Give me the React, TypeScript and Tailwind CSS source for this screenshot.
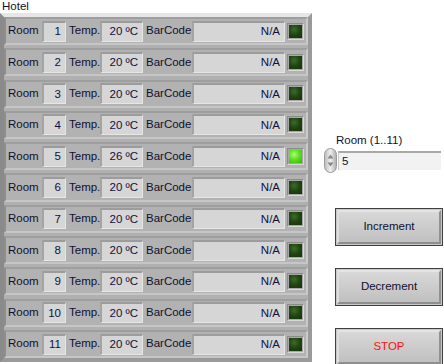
import React from "react";

const rows = Array.from({ length: 11 }, (_, i) => ({
  n: i + 1,
  t: i === 4 ? 26 : 20,
  on: i === 4,
}));

function Box({ w, children }: { w: string; children: React.ReactNode }) {
  return (
    <div
      className={`${w} h-[21px] flex items-center justify-end pr-[4px] bg-[#d6d6d6] border-t-2 border-l-2 border-b border-r border-t-[#9c9c9c] border-l-[#a4a4a4] border-b-[#e6e6e6] border-r-[#e6e6e6] text-[#101040]`}
    >
      {children}
    </div>
  );
}

function Led({ on }: { on: boolean }) {
  return (
    <div className="w-[17px] h-[17px] p-[1px] bg-[#a8a8a8] border-t border-l border-t-[#8c8c8c] border-l-[#8c8c8c] border-b border-r border-b-[#d8d8d8] border-r-[#d8d8d8]">
      <div
        className={
          on
            ? "w-full h-full bg-[radial-gradient(circle_at_40%_35%,#a8ff70_0%,#5ee022_45%,#3cb010_100%)]"
            : "w-full h-full bg-[radial-gradient(circle_at_40%_35%,#3e6a2c_0%,#1f4410_50%,#143208_100%)]"
        }
      />
    </div>
  );
}

function Row({ n, t, on }: { n: number; t: number; on: boolean }) {
  return (
    <div className="h-[28.5px] flex items-center bg-[#b2b2b2] border-2 border-t-[#9e9e9e] border-l-[#8e8e8e] border-r-[#cacaca] border-b-[#c6c6c6]">
      <div className="w-[36px] pl-[2px]">Room</div>
      <Box w="w-[24px]">{n}</Box>
      <div className="w-[34px] pl-[3px]">Temp.</div>
      <Box w="w-[43px]">{t} ºC</Box>
      <div className="w-[49px] pl-[3px]">BarCode</div>
      <Box w="w-[93px]">N/A</Box>
      <div className="ml-[2px]">
        <Led on={on} />
      </div>
    </div>
  );
}

function Btn({ label, red }: { label: string; red?: boolean }) {
  return (
    <div className="w-[108px] h-[38px] border border-[#404040] bg-[#c8c8c8] p-[1px]">
      <div className="w-full h-full flex items-center justify-center border-2 border-t-[#e4e4e4] border-l-[#dedede] border-r-[#929292] border-b-[#8e8e8e] bg-[linear-gradient(#d8d8d8,#c0c0c0)]">
        <span className={red ? "text-[#ff1010]" : "text-[#101030]"}>{label}</span>
      </div>
    </div>
  );
}

export default function App() {
  return (
    <div
      className="w-[444px] h-[364px] bg-white flex text-[11.5px] text-[#101030] overflow-hidden"
      style={{ fontFamily: "Tahoma, 'Liberation Sans', Arial, sans-serif" }}
    >
      <div className="w-[313px] flex flex-col">
        <div className="h-[14px] pl-[2px] leading-[14px] -mt-[1px]">Hotel</div>
        <div className="w-[312px] h-[349px] bg-[#b0b0b0] border-4 border-t-[#e6e6e6] border-l-[#8a8a8a] border-r-[#9a9a9a] border-b-[#9a9a9a] flex flex-col gap-[3.2px]">
          {rows.map((r) => (
            <Row key={r.n} {...r} />
          ))}
        </div>
      </div>
      <div className="flex-1 flex flex-col pl-[11px]">
        <div className="mt-[133px] pl-[12px] h-[14px] leading-[14px]">Room (1..11)</div>
        <div className="flex items-center mt-[1px]">
          <div className="w-[13px] h-[25px] rounded-full bg-[linear-gradient(90deg,#c0c0c0,#eeeeee,#b0b0b0)] border border-[#9a9a9a] flex flex-col items-center justify-center gap-[3px]">
            <svg width="7" height="5" viewBox="0 0 7 5">
              <path d="M3.5 0.5 L6.5 4.5 L0.5 4.5 Z" fill="#888" />
            </svg>
            <svg width="7" height="5" viewBox="0 0 7 5">
              <path d="M0.5 0.5 L6.5 0.5 L3.5 4.5 Z" fill="#888" />
            </svg>
          </div>
          <div className="ml-[1px] w-[103px] h-[19px] bg-[#f2f2f2] border-t-2 border-l border-t-[#a8a8a8] border-l-[#c8c8c8] pl-[3px] flex items-center">
            5
          </div>
        </div>
        <div className="mt-[35px] ml-[11px]">
          <Btn label="Increment" />
        </div>
        <div className="mt-[22px] ml-[11px]">
          <Btn label="Decrement" />
        </div>
        <div className="mt-[22px] ml-[11px]">
          <Btn label="STOP" red />
        </div>
      </div>
    </div>
  );
}
